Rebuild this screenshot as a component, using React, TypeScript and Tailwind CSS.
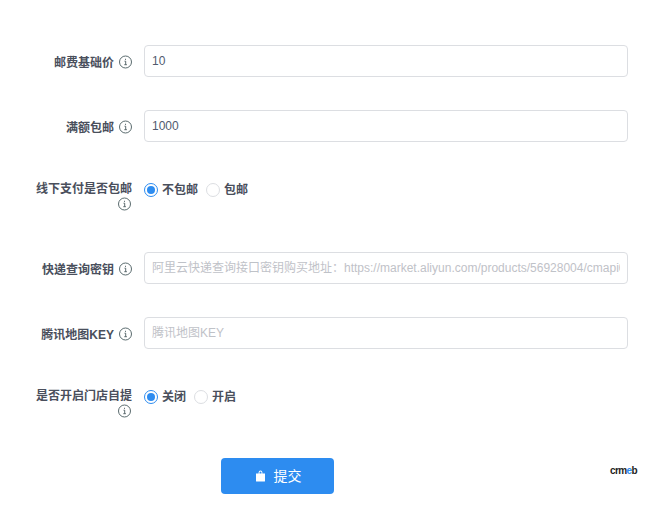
const FONT = "font-['Liberation_Sans','Noto_Sans_CJK_SC',sans-serif]"

function InfoIcon() {
  return (
    <svg width="14" height="14" viewBox="0 0 14 14" className="inline-block align-[-2px]" fill="none">
      <circle cx="6.500" cy="7" r="6" stroke="#5a6b6e" strokeWidth="1" />
      <path d="M5.500 6.200h1.200v3.400M5.300 9.700h2.600" stroke="#4a5a5e" strokeWidth="0.9" />
      <rect x="6" y="3.800" width="1" height="1" fill="#4a5a5e" />
    </svg>
  )
}

function Label({ text, wrap = false }: { text: string; wrap?: boolean }) {
  if (wrap) {
    return (
      <div className="w-[144px] shrink-0 pr-3 pt-[7px] pb-[7px] text-right text-xs font-bold leading-[15px] text-[#4a4f5c]">
        <div>{text}</div>
        <div className="h-[15px]"><InfoIcon /></div>
      </div>
    )
  }
  return (
    <div className="flex h-[32px] w-[144px] shrink-0 items-center justify-end gap-[5px] pr-[11px] pt-[2px] text-xs font-bold leading-[15px] text-[#4a4f5c]">
      <span className="pt-[2px]">{text}</span>
      <InfoIcon />
    </div>
  )
}

function TextRow({ label, value, placeholder }: { label: string; value?: string; placeholder?: string }) {
  return (
    <div className="mb-[33px] flex">
      <Label text={label} />
      <input
        readOnly
        value={value}
        placeholder={placeholder}
        className="h-8 min-w-0 flex-1 rounded border border-[#dcdee2] bg-white px-[7px] text-xs text-[#515a6e] outline-none placeholder:text-[#bfc2c8]"
      />
    </div>
  )
}

function Radio({ label, on = false }: { label: string; on?: boolean }) {
  return (
    <div className="mr-2 flex items-center gap-1">
      {on ? (
        <span className="flex h-[14px] w-[14px] items-center justify-center rounded-full border border-[#2d8cf0] bg-white">
          <span className="h-2 w-2 rounded-full bg-[#2d8cf0]" />
        </span>
      ) : (
        <span className="h-[14px] w-[14px] rounded-full border border-[#dcdee2] bg-white" />
      )}
      <span className="text-xs font-bold text-[#4a4f5c]">{label}</span>
    </div>
  )
}

function RadioRow({ label, options }: { label: string; options: string[] }) {
  return (
    <div className="mb-[33px] flex">
      <Label text={label} wrap />
      <div className="flex h-[30px] items-center">
        {options.map((o, i) => <Radio key={o} label={o} on={i === 0} />)}
      </div>
    </div>
  )
}

export default function App() {
  return (
    <div className={`h-[505px] w-[657px] bg-white pl-0 pr-[29px] pt-[45px] ${FONT}`}>
      <TextRow label="邮费基础价" value="10" />
      <TextRow label="满额包邮" value="1000" />
      <RadioRow label="线下支付是否包邮" options={['不包邮', '包邮']} />
      <TextRow
        label="快递查询密钥"
        placeholder="阿里云快递查询接口密钥购买地址：https://market.aliyun.com/products/56928004/cmapi021863.html"
      />
      <TextRow label="腾讯地图KEY" placeholder="腾讯地图KEY" />
      <RadioRow label="是否开启门店自提" options={['关闭', '开启']} />

      <div className="-mt-[1px] flex items-start">
        <button className="ml-[221px] flex h-9 w-[113px] items-center justify-center gap-[8px] rounded bg-[#2d8cf0] text-sm text-white">
          <svg width="11" height="12" viewBox="0 0 11 12" fill="white" className="ml-[1px]">
            <path d="M1 3.500h2.600V2.400a1.900 1.900 0 0 1 3.800 0v1.100H10v7.400a.6.6 0 0 1-.6.6H1.600a.6.6 0 0 1-.6-.6zM4.500 3.500h2V2.400a1 1 0 0 0-2 0z" fillRule="evenodd" />
          </svg>
          <span>提交</span>
        </button>
        <div className="ml-auto mr-[-9px] mt-[8px] text-[10px] font-bold leading-none tracking-[-0.6px] text-[#222]">
          crm<span className="text-[#2d8cf0]">e</span>b
        </div>
      </div>
    </div>
  )
}
